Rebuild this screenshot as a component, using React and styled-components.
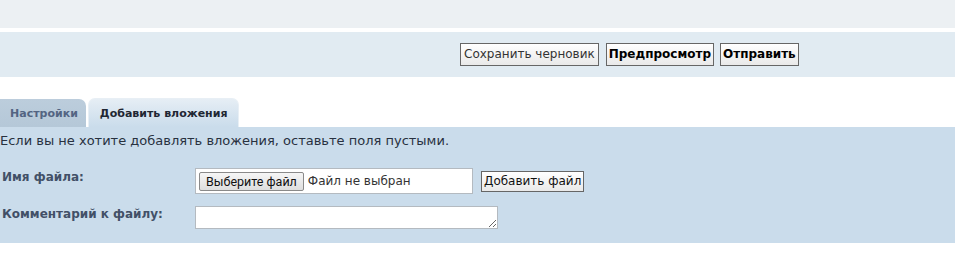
import React from "react";
import styled, { createGlobalStyle } from "styled-components";

const Global = createGlobalStyle`
  html, body {
    margin: 0;
    padding: 0;
    background: #ffffff;
  }
  body {
    font-family: "DejaVu Sans", Verdana, sans-serif;
    color: #28313f;
  }
`;

const Page = styled.div`
  width: 955px;
  display: flex;
  flex-direction: column;
`;

const TopBar = styled.div`
  height: 28px;
  background-color: #ecf0f3;
`;

const ActionBar = styled.div`
  margin-top: 4px;
  height: 45px;
  background-color: #e1ebf2;
  display: flex;
  align-items: center;
  gap: 7px;
  padding-left: 460px;
  box-sizing: border-box;
`;

const Button = styled.button`
  height: 23px;
  padding: 0 ${(p) => (p.$primary ? 2 : 3)}px;
  border: 1px solid #666666;
  background: linear-gradient(#ffffff, #e9e9e9);
  font-family: "DejaVu Sans", Verdana, sans-serif;
  font-size: 12px;
  font-weight: ${(p) => (p.$primary ? "bold" : "normal")};
  color: ${(p) => (p.$primary ? "#000000" : "#333333")};
  line-height: 21px;
  cursor: pointer;
  margin-left: ${(p) => p.$shift || 0}px;
`;

const Tabs = styled.div`
  margin-top: 21px;
  display: flex;
  align-items: flex-end;
  gap: 2px;
  height: 29px;
`;

const Tab = styled.div`
  height: ${(p) => (p.$active ? 29 : 28)}px;
  box-sizing: border-box;
  padding: 1px ${(p) => (p.$active ? 11 : 8)}px 0 ${(p) => (p.$active ? 11 : 10)}px;
  display: flex;
  align-items: center;
  font-size: 11px;
  font-weight: bold;
  border-radius: ${(p) => (p.$active ? "7px 7px 0 0" : "0 7px 0 0")};
  color: ${(p) => (p.$active ? "#1f2733" : "#536482")};
  background: ${(p) =>
    p.$active
      ? "linear-gradient(#e6eef5, #cadceb)"
      : "linear-gradient(#bccddc, #b5c8d8)"};
  border: ${(p) => (p.$active ? "1px solid #e8eff5" : "none")};
  border-bottom: none;
`;

const Panel = styled.div`
  background-color: #cadceb;
  height: 116px;
  box-sizing: border-box;
  padding: 6px 0 0 0;
`;

const Intro = styled.p`
  margin: 0;
  font-size: 13px;
  line-height: 16px;
  color: #28313f;
`;

const Row = styled.div`
  display: flex;
  align-items: flex-start;
  margin-top: ${(p) => p.$top}px;
`;

const Label = styled.label`
  width: 195px;
  padding-left: 2px;
  font-size: 12px;
  font-weight: bold;
  color: #425067;
  line-height: 15px;
  padding-top: ${(p) => p.$pad || 0}px;
  flex-shrink: 0;
  box-sizing: border-box;
`;

const FileBox = styled.div`
  width: 278px;
  height: 26px;
  box-sizing: border-box;
  background: #ffffff;
  border: 1px solid #b4bac0;
  display: flex;
  align-items: center;
  padding-left: 3px;
  gap: 4px;
`;

const FileButton = styled.span`
  height: 19px;
  box-sizing: border-box;
  padding: 0 6px;
  border: 1px solid #8a8a8a;
  border-radius: 2px;
  background: linear-gradient(#f6f6f6, #dedede);
  font-family: "Roboto", "Liberation Sans", sans-serif;
  font-size: 12.5px;
  line-height: 17px;
  color: #111111;
`;

const FileName = styled.span`
  font-size: 12px;
  color: #333333;
`;

const AddButton = styled(Button)`
  height: 21px;
  line-height: 19px;
  margin-left: 8px;
  margin-top: 3px;
  padding: 0 2px;
  font-weight: normal;
  color: #111111;
`;

const Comment = styled.textarea`
  width: 303px;
  height: 23px;
  box-sizing: border-box;
  border: 1px solid #b4bac0;
  background: #ffffff;
  margin: 0;
  padding: 2px;
  font-family: "DejaVu Sans", Verdana, sans-serif;
  font-size: 12px;
`;

export default function App() {
  return (
    <Page>
      <Global />
      <TopBar />
      <ActionBar>
        <Button>Сохранить черновик</Button>
        <Button $primary>Предпросмотр</Button>
        <Button $primary $shift={-1}>Отправить</Button>
      </ActionBar>
      <Tabs>
        <Tab>Настройки</Tab>
        <Tab $active>Добавить вложения</Tab>
      </Tabs>
      <Panel>
        <Intro>Если вы не хотите добавлять вложения, оставьте поля пустыми.</Intro>
        <Row $top={19}>
          <Label $pad={2}>Имя файла:</Label>
          <FileBox>
            <FileButton>Выберите файл</FileButton>
            <FileName>Файл не выбран</FileName>
          </FileBox>
          <AddButton>Добавить файл</AddButton>
        </Row>
        <Row $top={12}>
          <Label $pad={1}>Комментарий к файлу:</Label>
          <Comment />
        </Row>
      </Panel>
    </Page>
  );
}
